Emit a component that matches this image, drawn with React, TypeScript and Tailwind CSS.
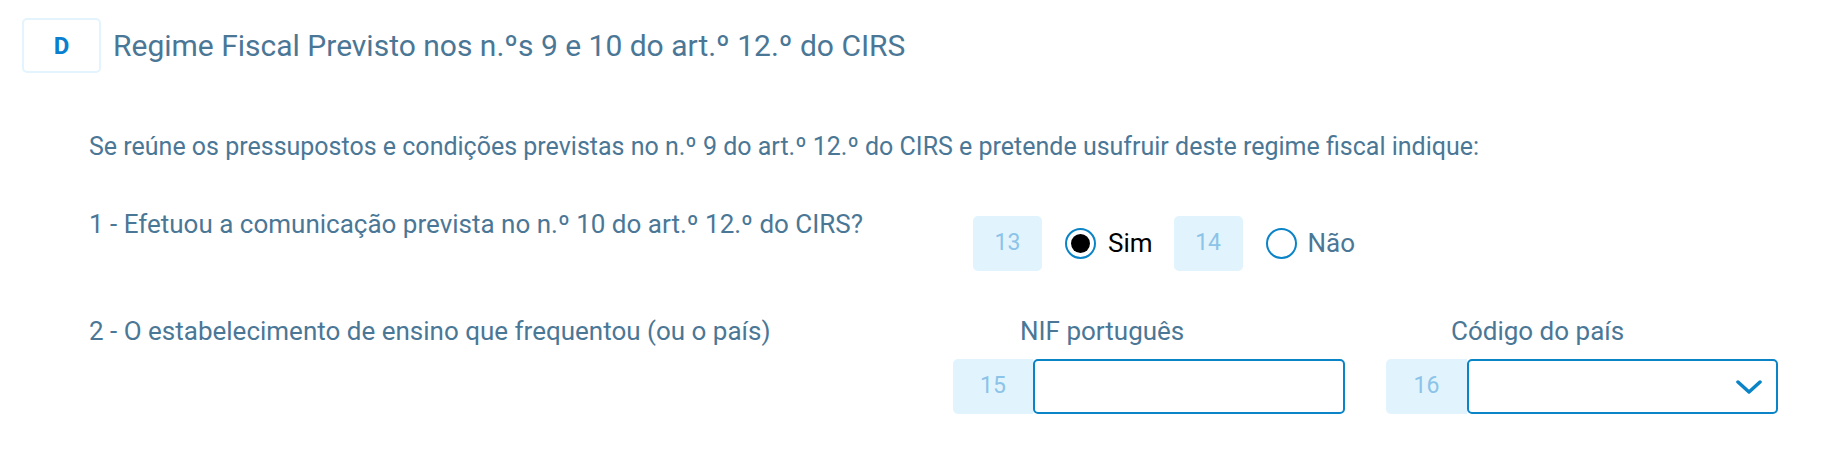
import React from "react";

const txt = "text-[#4b7796]";

function Radio({ checked }: { checked: boolean }) {
  return (
    <div className="w-[31px] h-[31px] rounded-full border-[2.5px] border-[#0a84c6] flex items-center justify-center bg-white">
      {checked && <div className="w-[19px] h-[19px] rounded-full bg-black" />}
    </div>
  );
}

function NumBox({ n, w }: { n: string; w: string }) {
  return (
    <div className={`${w} h-[55px] bg-[#e1f4fd] rounded-[5px] flex items-center justify-center text-[23px] text-[#8cc3e8]`}>
      {n}
    </div>
  );
}

export default function App() {
  return (
    <div className="w-[1828px] h-[450px] bg-white overflow-hidden font-['Roboto',sans-serif]">
      <div className="flex items-center pl-[22px] pt-[18px] gap-[12px]">
        <div className="w-[79px] h-[55px] border-2 border-[#e3f4fe] rounded-[5px] flex items-center justify-center text-[24px] font-bold text-[#0b7fcf]">
          D
        </div>
        <div className={`text-[30px] leading-none ${txt}`}>
          Regime Fiscal Previsto nos n.ºs 9 e 10 do art.º 12.º do CIRS
        </div>
      </div>

      <div className="pl-[89px]">
        <p className={`mt-[58px] text-[25px] leading-[32px] ${txt}`}>
          Se reúne os pressupostos e condições previstas no n.º 9 do art.º 12.º do CIRS e pretende usufruir deste regime fiscal indique:
        </p>

        <div className="flex mt-[45px]">
          <div className={`w-[864px] text-[26px] leading-[32px] ${txt}`}>
            1 - Efetuou a comunicação prevista no n.º 10 do art.º 12.º do CIRS?
          </div>
          <div className="flex items-center pl-[20px] mt-[8px]">
            <NumBox n="13" w="w-[69px]" />
            <div className="ml-[23px]">
              <Radio checked />
            </div>
            <span className="ml-[12px] text-[26px] text-black">Sim</span>
            <div className="ml-[21px]">
              <NumBox n="14" w="w-[69px]" />
            </div>
            <div className="ml-[23px]">
              <Radio checked={false} />
            </div>
            <span className={`ml-[11px] text-[26px] ${txt}`}>Não</span>
          </div>
        </div>

        <div className="flex mt-[44px]">
          <div className={`w-[864px] text-[26px] leading-[32px] ${txt}`}>
            2 - O estabelecimento de ensino que frequentou (ou o país)
          </div>
          <div className="flex gap-[41px]">
            <div className="flex flex-col">
              <div className={`pl-[67px] text-[26px] leading-[32px] ${txt}`}>NIF português</div>
              <div className="flex mt-[12px]">
                <div className="w-[80px] h-[55px] bg-[#e1f4fd] rounded-l-[5px] flex items-center justify-center text-[23px] text-[#8cc3e8]">
                  15
                </div>
                <div className="w-[312px] h-[55px] border-[2.5px] border-[#0a84c6] rounded-[5px] bg-white" />
              </div>
            </div>
            <div className="flex flex-col">
              <div className={`pl-[65px] text-[26px] leading-[32px] ${txt}`}>Código do país</div>
              <div className="flex mt-[12px]">
                <div className="w-[81px] h-[55px] bg-[#e1f4fd] rounded-l-[5px] flex items-center justify-center text-[23px] text-[#8cc3e8]">
                  16
                </div>
                <div className="w-[311px] h-[55px] border-[2.5px] border-[#0a84c6] rounded-[5px] bg-white flex items-center justify-end pr-[14px]">
                  <svg width="26" height="16" viewBox="0 0 26 16">
                    <polyline points="2,3 13,13 24,3" fill="none" stroke="#0a84c6" strokeWidth="3.5" strokeLinecap="round" strokeLinejoin="round" />
                  </svg>
                </div>
              </div>
            </div>
          </div>
        </div>
      </div>
    </div>
  );
}
